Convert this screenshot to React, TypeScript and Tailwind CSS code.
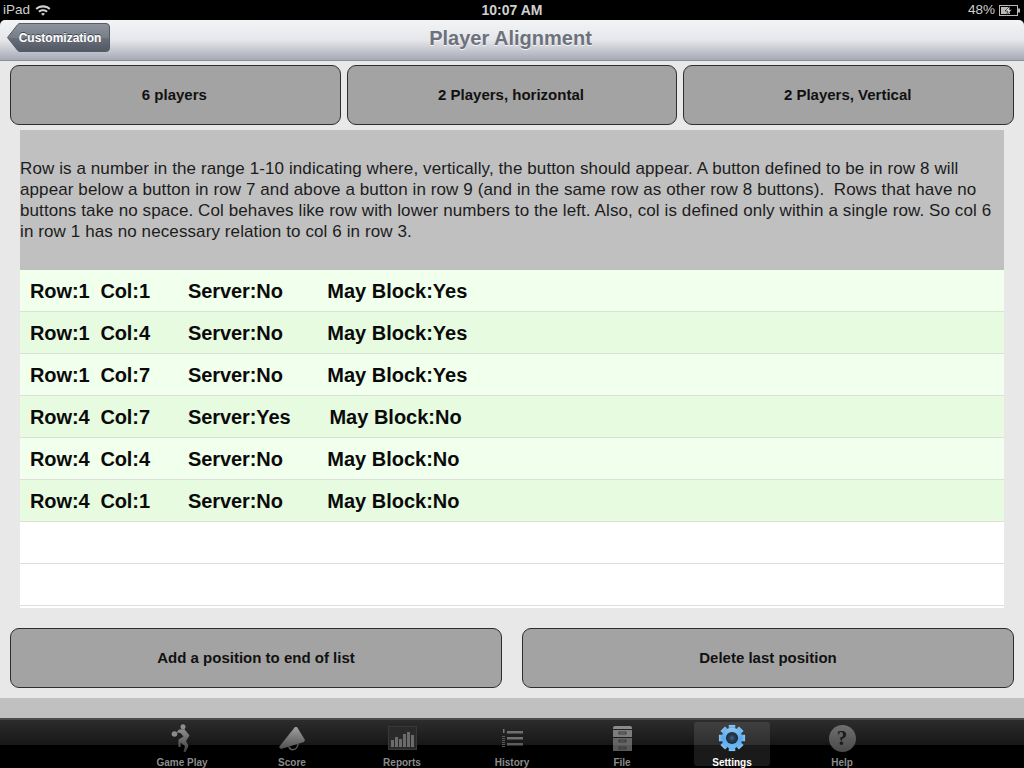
const font = "[font-family:'Liberation_Sans',Arial,sans-serif]";

const rows = [
  ["Row:1  Col:1       Server:No", "        May Block:Yes"],
  ["Row:1  Col:4       Server:No", "        May Block:Yes"],
  ["Row:1  Col:7       Server:No", "        May Block:Yes"],
  ["Row:4  Col:7       Server:Yes", "       May Block:No"],
  ["Row:4  Col:4       Server:No", "        May Block:No"],
  ["Row:4  Col:1       Server:No", "        May Block:No"],
  ["", ""],
  ["", ""],
  ["", ""],
];

const WifiIcon = () => (
  <svg width="16" height="12" viewBox="0 0 16 12" className="ml-[5px]">
    <path d="M0.5 4.2 C4.5 0.2 11.5 0.2 15.5 4.2 L14 5.8 C10.8 2.6 5.2 2.6 2 5.8 Z" fill="#d0d0d0" />
    <path d="M3.2 7 C5.8 4.6 10.2 4.6 12.8 7 L11.3 8.5 C9.4 6.9 6.6 6.9 4.7 8.5 Z" fill="#d0d0d0" />
    <path d="M6 9.7 C7.2 8.8 8.8 8.8 10 9.7 L8 11.8 Z" fill="#d0d0d0" />
  </svg>
);

const BatteryIcon = () => (
  <svg width="22" height="11" viewBox="0 0 22 11" className="ml-[4px]">
    <rect x="0.5" y="0.5" width="18" height="10" fill="none" stroke="#b8b8b8" />
    <rect x="2" y="2" width="9" height="7" fill="#b8b8b8" />
    <rect x="19" y="3.5" width="2" height="4" fill="#b8b8b8" />
    <path d="M11 1 L6 6 H9 L7.5 10 L13 4.8 H10 Z" fill="#e8e8e8" stroke="#000" strokeWidth="0.6" />
  </svg>
);

const BackShape = () => (
  <svg width="103" height="29" viewBox="0 0 103 29" className="absolute inset-0">
    <defs>
      <linearGradient id="back" x1="0" y1="0" x2="0" y2="1">
        <stop offset="0" stopColor="#8f959e" />
        <stop offset="0.5" stopColor="#777d88" />
        <stop offset="0.52" stopColor="#696f7a" />
        <stop offset="1" stopColor="#525863" />
      </linearGradient>
    </defs>
    <path
      d="M0.5 14.5 L10.5 1.8 Q11.5 0.5 13 0.5 H99 Q102.5 0.5 102.5 4 V25 Q102.5 28.5 99 28.5 H13 Q11.5 28.5 10.5 27.2 Z"
      fill="url(#back)"
      stroke="#565b64"
    />
  </svg>
);

const PlayerIcon = () => (
  <svg width="22" height="28" viewBox="0 0 22 28">
    <defs>
      <linearGradient id="tabGrey" x1="0" y1="0" x2="0" y2="1">
        <stop offset="0" stopColor="#8e8e8e" />
        <stop offset="1" stopColor="#3e3e3e" />
      </linearGradient>
    </defs>
    <circle cx="3.5" cy="10" r="2.8" fill="#8a8a8a" />
    <circle cx="12" cy="2.8" r="2.5" fill="#8e8e8e" />
    <path
      d="M8 5.5 L13.5 5.2 L18.5 11.5 L15 17 L17.5 22 L14.5 28 H12.5 L14 22 L9.5 18.5 L9.5 23 H7.5 L7.5 15.5 L12.5 12.5 L9.5 9 L5.5 8.5 Z"
      fill="url(#tabGrey)"
    />
  </svg>
);

const ScoreIcon = () => (
  <svg width="28" height="25" viewBox="0 0 28 25">
    <defs>
      <linearGradient id="scoreGrey" x1="0" y1="0" x2="0" y2="1">
        <stop offset="0" stopColor="#a0a0a0" />
        <stop offset="1" stopColor="#505050" />
      </linearGradient>
    </defs>
    <path d="M1 21 L17 1 L19 1 L27 14 L26 16 L3 23 Z" fill="url(#scoreGrey)" />
    <path d="M11 20.5 C12 25 19 25 20 18" fill="none" stroke="#5a5a5a" strokeWidth="1.5" />
  </svg>
);

const ReportsIcon = () => (
  <svg width="29" height="24" viewBox="0 0 29 24">
    <rect x="0.5" y="0.5" width="28" height="23" fill="#2a2a2a" stroke="#383838" />
    {[
      [3, 14],
      [7, 11],
      [11, 13],
      [15, 8],
      [19, 6],
      [23, 9],
    ].map(([x, y]) => (
      <rect key={x} x={x} y={y} width="3" height={21 - y} fill="#6b6b6b" />
    ))}
  </svg>
);

const HistoryIcon = () => (
  <svg width="21" height="18" viewBox="0 0 21 18">
    {[3, 9, 15].map((y) => (
      <rect key={y} x="5" y={y - 1} width="16" height="2.5" fill={y > 9 ? "#5c5c5c" : "#707070"} />
    ))}
    <rect x="1" y="0" width="1.5" height="4" fill="#777" />
    {[7, 9, 11, 13, 15, 17].map((y) => (
      <rect key={y} x="0" y={y} width="3" height="1" fill="#5a5a5a" />
    ))}
  </svg>
);

const FileIcon = () => (
  <svg width="21" height="27" viewBox="0 0 21 27">
    <path d="M1 3 Q1 1 3 1 H18 Q20 1 20 3 V4 H1 Z" fill="#8c8c8c" />
    {[5, 13, 20].map((y) => (
      <g key={y}>
        <rect x="1" y={y} width="19" height={y === 20 ? 6 : 7} fill={y === 5 ? "#7d7d7d" : y === 13 ? "#666" : "#595959"} />
        <rect x="7" y={y + 2} width="7" height="2" fill="none" stroke="#2e2e2e" strokeWidth="0.8" />
      </g>
    ))}
  </svg>
);

const GearIcon = () => (
  <svg width="28" height="28" viewBox="0 0 30 30">
    <defs>
      <linearGradient id="gear" x1="0" y1="0" x2="0" y2="1">
        <stop offset="0" stopColor="#92c8f6" />
        <stop offset="0.5" stopColor="#5aa8ec" />
        <stop offset="1" stopColor="#6cbaf7" />
      </linearGradient>
      <radialGradient id="hub">
        <stop offset="0" stopColor="#3a6c9e" />
        <stop offset="0.4" stopColor="#2a4058" />
        <stop offset="1" stopColor="#20262e" />
      </radialGradient>
    </defs>
    {[0, 45, 90, 135, 180, 225, 270, 315].map((a) => (
      <rect key={a} x="11.5" y="1" width="7" height="7" fill="url(#gear)" transform={`rotate(${a} 15 15)`} />
    ))}
    <circle cx="15" cy="15" r="11" fill="url(#gear)" />
    <circle cx="15" cy="15" r="6.5" fill="url(#hub)" />
  </svg>
);

const HelpIcon = () => (
  <div className="w-[27px] h-[27px] rounded-full bg-gradient-to-b from-[#707070] to-[#4a4a4a] flex items-center justify-center text-[21px] font-bold text-[#191919] [font-family:'Liberation_Serif',serif] leading-none">
    ?
  </div>
);

const tabs = [
  { label: "Game Play", icon: <PlayerIcon /> },
  { label: "Score", icon: <ScoreIcon /> },
  { label: "Reports", icon: <ReportsIcon /> },
  { label: "History", icon: <HistoryIcon /> },
  { label: "File", icon: <FileIcon /> },
  { label: "Settings", icon: <GearIcon />, active: true },
  { label: "Help", icon: <HelpIcon /> },
];

const ActionButton = ({ label, className = "" }: { label: string; className?: string }) => (
  <button className={`flex-1 h-[60px] bg-[#a3a3a3] border border-[#2e2e2e] rounded-[9px] text-[15px] font-bold text-[#111] ${className}`}>
    {label}
  </button>
);

const App = () => {
  return (
    <div className={`w-[1024px] h-[768px] overflow-hidden flex flex-col bg-black ${font}`}>
      <div className="h-[20px] px-[3px] flex items-center text-[#cfcfcf] text-[13.5px]">
        <div className="flex-1 flex items-center">
          <span>iPad</span>
          <WifiIcon />
        </div>
        <span className="text-[14px] font-bold text-[#d0d0d0]">10:07 AM</span>
        <div className="flex-1 flex items-center justify-end">
          <span>48%</span>
          <BatteryIcon />
        </div>
      </div>

      <div className="h-[41px] shrink-0 relative flex items-center justify-center pb-[4px] rounded-t-[5px] border-b border-[#8a8e98] bg-gradient-to-b from-[#f3f4f6] via-[#e6e7ea] to-[#a6aab6]">
        <button className="absolute left-[7px] top-[3px] w-[103px] h-[29px] text-white text-[12px] font-bold pl-[3px] [text-shadow:0_-1px_0_#40444c]">
          <BackShape />
          <span className="relative">Customization</span>
        </button>
        <h1 className="text-[20px] font-bold text-[#6d717c] pr-[3px] [text-shadow:0_1px_0_#f4f4f6]">Player Alignment</h1>
      </div>

      <div className="flex-1 bg-[#e8e8e8] flex flex-col">
        <div className="flex gap-[6px] px-[10px] pt-[4px]">
          <ActionButton label="6 players" className="pr-[2px]" />
          <ActionButton label="2 Players, horizontal" className="pr-[2px]" />
          <ActionButton label="2 Players, Vertical" className="pr-[2px]" />
        </div>

        <div className="mx-[20px] mt-[5px] h-[140px] bg-[#c0c0c0] flex items-center text-[17px] tracking-[0.1px] leading-[21px] text-[#1c1c1c]">
          <p className="whitespace-pre-wrap">
            Row is a number in the range 1-10 indicating where, vertically, the button should appear. A button defined to be in row 8 will appear below a button in row 7 and above a button in row 9 (and in the same row as other row 8 buttons).  Rows that have no buttons take no space. Col behaves like row with lower numbers to the left. Also, col is defined only within a single row. So col 6 in row 1 has no necessary relation to col 6 in row 3.
          </p>
        </div>

        <div className="mx-[20px] h-[338px] overflow-hidden bg-white">
          {rows.map(([left, right], i) => (
            <div
              key={i}
              className={`h-[42px] shrink-0 border-b border-[#dcdfdc] pl-[10px] flex items-center text-[20px] font-bold text-[#0a0a0a] whitespace-pre ${
                left === "" ? "bg-white" : i % 2 === 0 ? "bg-[#f1ffed]" : "bg-[#e6fbe0]"
              }`}
            >
              <span className="tracking-[-0.1px]">{left}</span>
              <span>{right}</span>
            </div>
          ))}
        </div>

        <div className="flex gap-[20px] px-[10px] mt-[20px] pb-[10px]">
          <ActionButton label="Add a position to end of list" />
          <ActionButton label="Delete last position" />
        </div>
      </div>

      <div className="h-[20px] shrink-0 bg-[#c0c0c0]" />

      <div className="h-[50px] shrink-0 relative border-t-2 border-[#4a4a4a] flex justify-center bg-[linear-gradient(#2c2c2c_0,#171717_25px,#000_25px)]">
        {tabs.map((tab) => (
          <div key={tab.label} className="w-[110px] flex justify-center">
            <div
              className={`w-[76px] h-[44px] mt-[2px] rounded-[3px] flex flex-col items-center ${
                tab.active ? "bg-white/10" : ""
              }`}
            >
              <div className="h-[32px] shrink-0 flex items-center justify-center">{tab.icon}</div>
              <span className={`text-[10px] font-bold leading-[14px] mt-[2px] ${tab.active ? "text-white" : "text-[#8c8c8c]"}`}>
                {tab.label}
              </span>
            </div>
          </div>
        ))}
      </div>
    </div>
  );
};

export default App;
